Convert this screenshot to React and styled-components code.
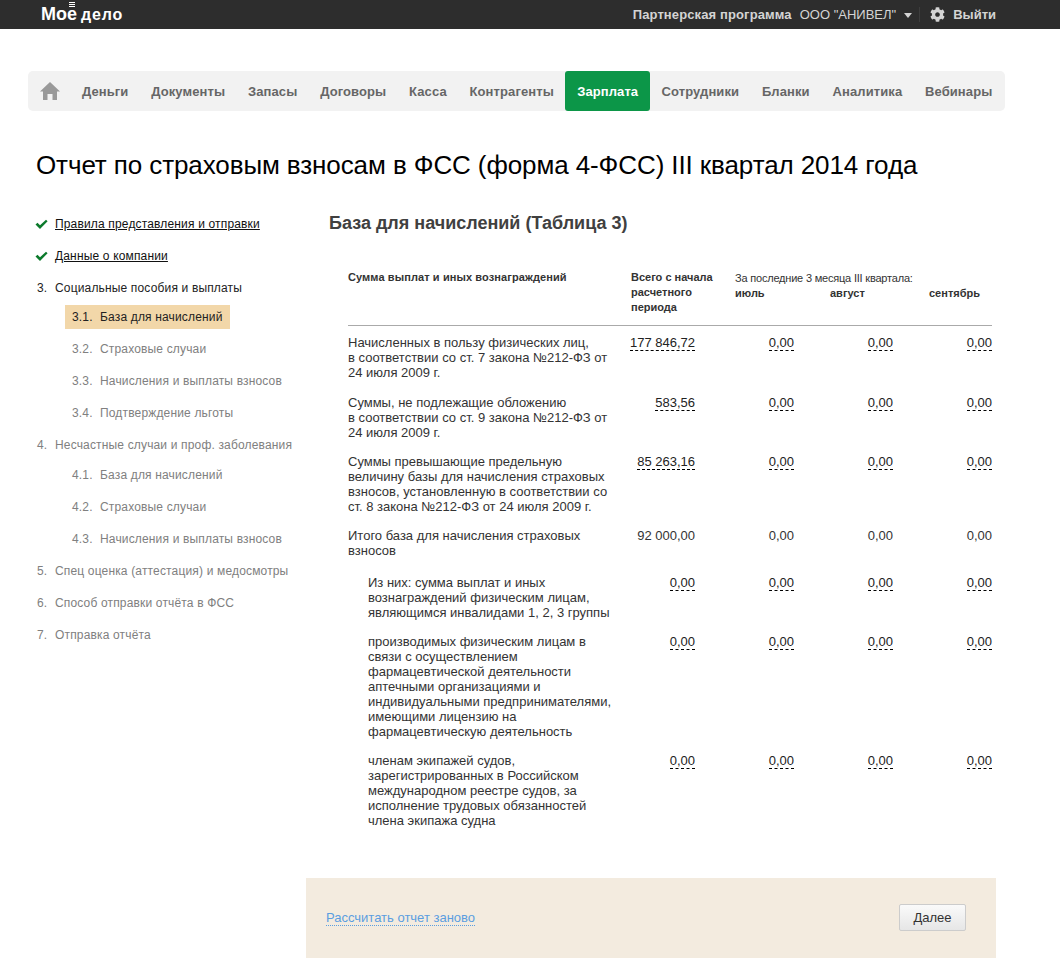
import React from 'react';
import styled, { createGlobalStyle } from 'styled-components';
import { FaCog } from 'react-icons/fa';

const menu = ['Деньги', 'Документы', 'Запасы', 'Договоры', 'Касса', 'Контрагенты', 'Зарплата', 'Сотрудники', 'Бланки', 'Аналитика', 'Вебинары'];

const steps = [
  { mark: 'done', text: 'Правила представления и отправки' },
  { mark: 'done', text: 'Данные о компании' },
  { num: '3.', text: 'Социальные пособия и выплаты', current: true },
  { num: '3.1.', text: 'База для начислений', sub: true, active: true, pull: 4 },
  { num: '3.2.', text: 'Страховые случаи', sub: true },
  { num: '3.3.', text: 'Начисления и выплаты взносов', sub: true },
  { num: '3.4.', text: 'Подтверждение льготы', sub: true },
  { num: '4.', text: 'Несчастные случаи и проф. заболевания' },
  { num: '4.1.', text: 'База для начислений', sub: true, pull: 2 },
  { num: '4.2.', text: 'Страховые случаи', sub: true },
  { num: '4.3.', text: 'Начисления и выплаты взносов', sub: true },
  { num: '5.', text: 'Спец оценка (аттестация) и медосмотры' },
  { num: '6.', text: 'Способ отправки отчёта в ФСС' },
  { num: '7.', text: 'Отправка отчёта' },
];

const rows = [
  { lines: ['Начисленных в пользу физических лиц,', 'в соответствии со ст. 7 закона №212-ФЗ от', '24 июля 2009 г.'], total: '177 846,72' },
  { lines: ['Суммы, не подлежащие обложению', 'в соответствии со ст. 9 закона №212-ФЗ от', '24 июля 2009 г.'], total: '583,56' },
  { lines: ['Суммы превышающие предельную', 'величину базы для начисления страховых', 'взносов, установленную в соответствии со', 'ст. 8 закона №212-ФЗ от 24 июля 2009 г.'], total: '85 263,16' },
  { lines: ['Итого база для начисления страховых', 'взносов'], total: '92 000,00', plain: true },
  { lines: ['Из них: сумма выплат и иных', 'вознаграждений физическим лицам,', 'являющимся инвалидами 1, 2, 3 группы'], total: '0,00', inner: true },
  { lines: ['производимых физическим лицам в', 'связи с осуществлением', 'фармацевтической деятельности', 'аптечными организациями и', 'индивидуальными предпринимателями,', 'имеющими лицензию на', 'фармацевтическую деятельность'], total: '0,00', inner: true },
  { lines: ['членам экипажей судов,', 'зарегистрированных в Российском', 'международном реестре судов, за', 'исполнение трудовых обязанностей', 'члена экипажа судна'], total: '0,00', inner: true },
];

const GlobalStyle = createGlobalStyle`
  html, body {
    margin: 0;
    padding: 0;
    background: #fff;
    font-family: "Liberation Sans", Arial, sans-serif;
  }
`;

const App = () => {
  return (
    <>
      <GlobalStyle />
      <TopBar>
        <Logo>Мое<LogoBars /> <LogoTail>дело</LogoTail></Logo>
        <TopRight>
          <Partner>Партнерская программа</Partner>
          <Company>ООО "АНИВЕЛ"</Company>
          <Caret />
          <TopDivider />
          <FaCog size={15} color="#d4d4d4" />
          <Exit>Выйти</Exit>
        </TopRight>
      </TopBar>

      <Menu>
        <HomeLink>
          <svg width="20" height="18" viewBox="0 0 20 18">
            <path d="M10 0 L20 9.5 L17 9.5 L17 18 L12.5 18 L12.5 12 L7.5 12 L7.5 18 L3 18 L3 9.5 L0 9.5 Z" fill="#999" />
          </svg>
        </HomeLink>
        {menu.map((item) => (
          <MenuItem key={item} $active={item === 'Зарплата'}>{item}</MenuItem>
        ))}
      </Menu>

      <Title>Отчет по страховым взносам в ФСС (форма 4-ФСС) III квартал 2014 года</Title>

      <Columns>
        <Sidebar>
          {steps.map((s) => (
            <Step key={s.num ? s.num + s.text : s.text} $sub={s.sub} $pull={s.pull} $active={s.active}>
              <StepLabel $active={s.active} $dark={s.current || s.active}>
                <StepNum $sub={s.sub}>
                  {s.mark === 'done' ? (
                    <CheckMark width="13" height="11" viewBox="0 0 13 11">
                      <path d="M0.5 5.5 L2.5 3.8 L5 6.2 L11 0.8 L12.6 2.2 L5 10 Z" fill="#0c7a2c" />
                    </CheckMark>
                  ) : s.num}
                </StepNum>
                {s.mark === 'done' ? <StepLink>{s.text}</StepLink> : s.text}
              </StepLabel>
            </Step>
          ))}
        </Sidebar>

        <Content>
          <Heading>База для начислений (Таблица 3)</Heading>
          <TableHead>
            <HeadName>Сумма выплат и иных вознаграждений</HeadName>
            <HeadTotal>Всего с начала<br />расчетного<br />периода</HeadTotal>
            <HeadMonths>
              <HeadCaption>За последние 3 месяца III квартала:</HeadCaption>
              <MonthRow>
                <span>июль</span>
                <span>август</span>
                <span>сентябрь</span>
              </MonthRow>
            </HeadMonths>
          </TableHead>
          {rows.map((r) => (
            <Row key={r.lines[0]} $plain={r.plain}>
              <RowName $inner={r.inner}>
                {r.lines.map((l) => <div key={l}>{l}</div>)}
              </RowName>
              <Amount $plain={r.plain}><span>{r.total}</span></Amount>
              <Amount $plain={r.plain}><span>0,00</span></Amount>
              <Amount $plain={r.plain}><span>0,00</span></Amount>
              <Amount $plain={r.plain}><span>0,00</span></Amount>
            </Row>
          ))}
          <Footer>
            <Recalc>Рассчитать отчет заново</Recalc>
            <NextButton>Далее</NextButton>
          </Footer>
        </Content>
      </Columns>
    </>
  );
};

export default App;

const TopBar = styled.div`
  height: 29px;
  background: #2d2d2d;
  display: flex;
  align-items: center;
  justify-content: space-between;
  padding: 0 64px 1px 41px;
  box-sizing: border-box;
`;

const Logo = styled.div`
  position: relative;
  color: #fff;
  font-size: 18px;
  font-weight: bold;
`;

const LogoTail = styled.span`
  font-size: 16px;
  letter-spacing: 0.8px;
  margin-left: -1px;
`;

const LogoBars = styled.span`
  position: absolute;
  left: 28px;
  top: -2px;
  width: 6px;
  height: 5px;
  background: repeating-linear-gradient(#fff 0 1px, transparent 1px 2px);
`;

const TopRight = styled.div`
  display: flex;
  align-items: center;
  font-size: 13px;
  color: #d4d4d4;
`;

const Partner = styled.span`
  font-weight: bold;
  letter-spacing: 0.12px;
`;

const Company = styled.span`
  margin-left: 8px;
`;

const Caret = styled.span`
  margin-left: 8px;
  margin-top: 3px;
  border-left: 4px solid transparent;
  border-right: 4px solid transparent;
  border-top: 5px solid #d4d4d4;
`;

const TopDivider = styled.span`
  width: 1px;
  height: 15px;
  background: #3d3d3d;
  margin: 0 10px 0 7px;
`;

const Exit = styled.span`
  font-weight: bold;
  margin-left: 8px;
`;

const Menu = styled.div`
  display: flex;
  align-items: stretch;
  height: 40px;
  width: 977px;
  margin: 42px 0 0 28px;
  background: #f2f2f2;
  border-radius: 5px;
`;

const HomeLink = styled.div`
  display: flex;
  align-items: center;
  padding: 0 10.5px 0 12px;
`;

const MenuItem = styled.div`
  display: flex;
  align-items: center;
  padding: 0 ${(p) => (p.$active ? '11.9px' : '11.4px')};
  font-size: 13px;
  font-weight: bold;
  letter-spacing: 0.1px;
  color: ${(p) => (p.$active ? '#fff' : '#666')};
  background: ${(p) => (p.$active ? '#0c9648' : 'transparent')};
  border-radius: ${(p) => (p.$active ? '3px' : '0')};
`;

const Title = styled.h1`
  margin: 40px 0 0 36px;
  font-size: 26px;
  letter-spacing: -0.1px;
  line-height: 28px;
  font-weight: normal;
  color: #000;
`;

const Columns = styled.div`
  display: flex;
  margin-top: 31px;
`;

const Sidebar = styled.div`
  width: 306px;
  flex: none;
  padding: 3px 0 0 37px;
  box-sizing: border-box;
`;

const Step = styled.div`
  height: ${(p) => (p.$active ? '33px' : '32px')};
  padding-left: ${(p) => (p.$sub ? '35px' : '0')};
  margin-top: ${(p) => (p.$pull ? `-${p.$pull}px` : '0')};
`;

const StepLabel = styled.div`
  display: inline-flex;
  align-items: center;
  box-sizing: border-box;
  height: 24px;
  padding: 0 7px ${(p) => (p.$active ? '0' : '2px')};
  margin-left: -7px;
  font-size: 12px;
  letter-spacing: 0.16px;
  color: ${(p) => (p.$dark ? '#222' : '#808080')};
  background: ${(p) => (p.$active ? '#f2d7a9' : 'transparent')};
`;

const StepNum = styled.span`
  display: inline-block;
  width: ${(p) => (p.$sub ? '28px' : '18px')};
`;

const CheckMark = styled.svg`
  display: block;
  margin: 1px 0 0 -2px;
`;

const StepLink = styled.span`
  color: #111;
  text-decoration: underline;
`;

const Content = styled.div`
  flex: 1;
  padding-top: 2px;
`;

const Heading = styled.h2`
  margin: 0 0 0 23px;
  font-size: 18px;
  line-height: 22px;
  font-weight: bold;
  color: #404040;
`;

const TableHead = styled.div`
  display: grid;
  grid-template-columns: 283px 104px 1fr;
  margin: 36px 0 9.4px 42px;
  width: 644px;
  height: 55px;
  border-bottom: 1px solid #aaa;
  font-size: 11px;
  font-weight: bold;
  color: #333;
  line-height: 15px;
`;

const HeadName = styled.div`
  letter-spacing: 0.1px;
`;

const HeadTotal = styled.div``;

const HeadCaption = styled.div`
  font-weight: normal;
  letter-spacing: -0.2px;
`;

const HeadMonths = styled.div`
  padding-top: 1px;
`;

const MonthRow = styled.div`
  display: grid;
  grid-template-columns: 95px 99px 1fr;
`;

const Row = styled.div`
  display: grid;
  grid-template-columns: 280px 67px 99px 99px 99px;
  width: 644px;
  margin-left: 42px;
  padding-bottom: ${(p) => (p.$plain ? '17px' : '14.15px')};
  font-size: 13px;
  line-height: 15px;
  color: #333;
`;

const RowName = styled.div`
  padding-left: ${(p) => (p.$inner ? '20px' : '0')};
`;

const Amount = styled.div`
  text-align: right;
  white-space: nowrap;
  span {
    border-bottom: ${(p) => (p.$plain ? 'none' : '1px dashed #000')};
    color: ${(p) => (p.$plain ? '#333' : '#222')};
  }
`;

const Footer = styled.div`
  display: flex;
  align-items: center;
  justify-content: space-between;
  height: 80px;
  width: 690px;
  margin-top: 35.7px;
  padding: 0 30px 0 20px;
  box-sizing: border-box;
  background: #f3ebdf;
`;

const Recalc = styled.span`
  font-size: 13px;
  color: #5b9ee0;
  border-bottom: 1px dotted #5b9ee0;
`;

const NextButton = styled.button`
  width: 67px;
  height: 27px;
  padding: 0;
  border: 1px solid #ccc;
  border-radius: 2px;
  background: linear-gradient(#fafafa, #e6e6e6);
  font-family: inherit;
  font-size: 13px;
  color: #333;
`;
